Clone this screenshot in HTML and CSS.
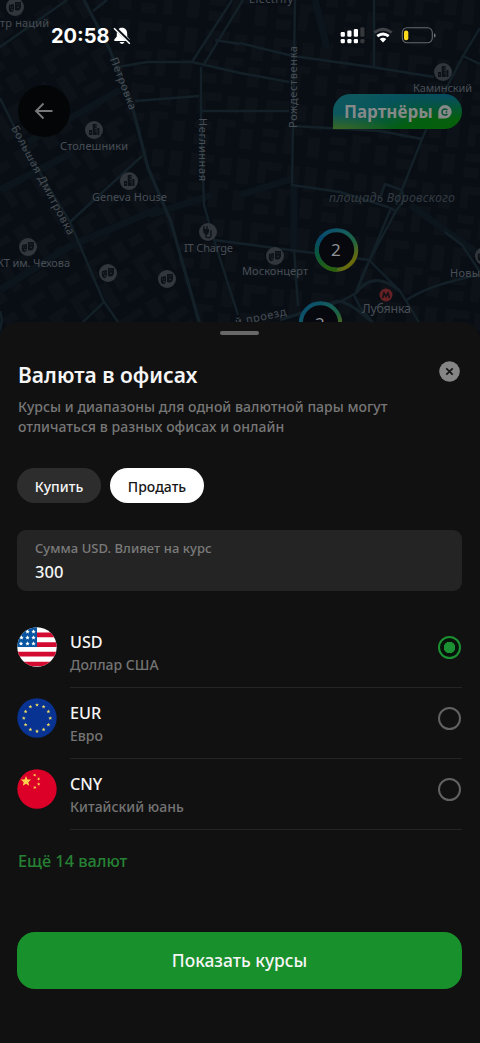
FILE: index.html
```html
<!DOCTYPE html>
<html lang="ru">
<head>
<meta charset="utf-8">
<meta name="viewport" content="width=device-width">
<title>Валюта в офисах</title>
<link rel="stylesheet" href="styles.css">
</head>
<body>
<div class="screen">
  <svg class="map" viewBox="0 0 480 345" width="480" height="345" aria-hidden="true">
    <defs>
      <pattern id="blocks" width="74" height="66" patternUnits="userSpaceOnUse" patternTransform="rotate(-32)">
        <path class="building" d="M4 5h26v7H12v12H4zM36 4h13v18H36zM55 7h14v9H55zM5 31h10v27H5zM21 30h20v7h-9v10H21zM48 27h21v8H56v16h-8zM23 53h20v8H23zM61 42h9v19h-9z"/>
      </pattern>
      <pattern id="blocks-east" width="68" height="62" patternUnits="userSpaceOnUse" patternTransform="rotate(7)">
        <path class="building" d="M5 4h23v8H13v14H5zM34 5h12v17H34zM52 4h12v25H52zM5 33h16v8H5zM27 29h18v7h-9v20h-9zM5 47h15v10H5zM51 36h12v20h-12z"/>
      </pattern>
      <linearGradient id="ring" x1="0" y1="0" x2="1" y2="1">
        <stop offset="0" stop-color="#064773"/><stop offset=".38" stop-color="#145d5d"/><stop offset=".62" stop-color="#1f6340"/><stop offset=".85" stop-color="#6c6c0c"/><stop offset="1" stop-color="#596307"/>
      </linearGradient>
      <linearGradient id="ring-left" x1="0" y1="0" x2="0" y2="1">
        <stop offset="0" stop-color="#064773"/><stop offset=".6" stop-color="#0b5836"/><stop offset="1" stop-color="#29600c"/>
      </linearGradient>
      <g id="office"><circle class="poi" r="9"/><path class="glyph" d="M-5 5V0h3v5zM-1.300 5v-11h4v11zM3.400 5v-7h2v7z"/><path class="poi-line" d="M.7-4h2M.7-1.500h2M.7 1h2M-4 2.500h1"/></g>
      <g id="theatre"><circle class="poi" r="9"/><path class="glyph" d="M-6-2l5-1v5q-1 4-3 3-3 0-2-7zM0-5h6v5q-1 5-6 3z"/><path class="poi-line" d="M-5 0h1m1 0h1M1.500-3h1m1 0h1M-4 3q1-1 2 0M2 0q1 1 2 0"/></g>
    </defs>
    <rect width="480" height="345" fill="#090e15"/>
    <path fill="url(#blocks)" d="M0 0h84l26 50 40 120 50 175H0z"/>
    <path fill="url(#blocks-east)" d="M90 0h390v345H204L150 170 110 50z"/>
    <g class="streets broad">
      <path d="M0 190l72-37M0 290l70-44 90-38M120 90l-92 52M240 195l55-17M410 205l70 50M150 215l62-20M315 0l12 48M294 185v68"/>
    </g>
    <g class="streets">
      <path d="M0 47 67 0M93 11 107 0"/>
      <path d="M84 0 110 50 134 113 148 168 171 222 200 325" class="main"/>
      <path d="M0 98 22 143 70 222 103 300 120 325M70 222 142 156M82 323 104 302M0 311 2 320 0 330"/>
      <path d="M118 67 147 62 192 62 240 73 289 82M135 101 199 96M202 111H289"/>
      <path d="M192 62 232 0M203 66 243 0M215 40 240 44M201 67V115L204 205 214 240 238 315"/>
      <path d="M214 240 290 250 370 260M240 43 293 56 372 67 434 77M374 0V66"/>
      <path d="M295 0 292 185 340 192 388 207M293 126 380 131 422 139M294 249 298 306"/>
      <path d="M480 28 463 56 434 112 422 139 396 205M463 56 480 64M380 198 385 184 402 190 404 200 396 211 388 207"/>
      <path d="M391 208 356 293 342 301 282 319M397 209 366 267 356 292M370 261 400 291 420 324M354 295 360 307 374 324M405 301Q430 284 480 275M445 232 462 245 480 272"/>
      <path d="M356 293Q374 269 400 291M280 320 338 301Q352 303 374 324" class="main"/>
    </g>
    <g class="labels">
      <text x="0" y="27" textLength="49">тр наций</text>
      <text x="249" y="3" textLength="44">Electrify</text>
      <text x="60" y="150" textLength="68">Столешники</text>
      <text x="92" y="201" textLength="75">Geneva House</text>
      <text x="-3" y="267" textLength="73">КТ им. Чехова</text>
      <text x="184" y="252" textLength="49">IT Charge</text>
      <text x="242" y="275" textLength="66">Москонцерт</text>
      <text x="413" y="92" textLength="59">Каминский</text>
      <text x="450" y="277" textLength="30">Новы</text>
      <text x="362" y="313" textLength="49" class="station">Лубянка</text>
      <text x="329" y="202" textLength="126" class="square">площадь Воровского</text>
      <text transform="translate(110 59) rotate(69)" textLength="55">Петровка</text>
      <text transform="translate(11 128) rotate(62)" textLength="122">Большая Дмитровка</text>
      <text transform="translate(199 118) rotate(90)" textLength="63">Неглинная</text>
      <text transform="translate(297 128) rotate(-90)" textLength="82">Рождественка</text>
      <text transform="translate(236 326) rotate(-12)" textLength="52">й проезд</text>
    </g>
    <use href="#theatre" x="15" y="7"/><use href="#office" x="94" y="130"/><use href="#office" x="129" y="181"/>
    <use href="#theatre" x="28" y="247"/><use href="#theatre" x="108" y="273"/><use href="#theatre" x="167" y="279"/><use href="#theatre" x="275" y="256"/>
    <use href="#office" x="443" y="72"/><use href="#theatre" x="484" y="256"/>
    <g transform="translate(208 232)"><circle class="poi" r="9"/><path class="glyph" d="M-5-3h6v3Q0 3-2 3-5 2-5-3z"/><path class="plug" d="M-4-6v3M-1-6v3M-2 2v3q5 2 5-2v-5"/></g>
    <circle cx="386" cy="295" r="6.500" fill="#652124"/><path d="M382.500 298l1.500-5 2 3.500 2-3.500 1.500 5" fill="none" stroke="#131117" stroke-width="1.600"/>
    <circle cx="336.500" cy="250" r="19.700" fill="#07080d" stroke="url(#ring)" stroke-width="4"/>
    <path d="M322.600 236A19.700 19.700 0 0 0 337 269.700" fill="none" stroke="url(#ring-left)" stroke-width="4"/>
    <text x="331" y="256" class="count">2</text>
    <circle cx="320.500" cy="323" r="19.700" fill="#07080d" stroke="url(#ring)" stroke-width="4"/>
    <text x="315" y="330" class="count">2</text>
  </svg>

  <header class="status">
    <div class="clock"><span>20:58</span>
      <svg width="18" height="18" viewBox="0 0 18 18"><path fill="#fff" d="M9 .8C5.700.800 3.800 3.300 3.800 7v2.500L1.300 12.500v1.400h15.400v-1.400l-2.500-3V7c0-3.700-1.900-6.200-5.200-6.200zM6.500 15h5Q9 19 6.500 15z"/><path d="M2.200 1 17.500 15.800" stroke="#090e15" stroke-width="3.200"/><path d="M1 1.300 16.800 16.700" stroke="#fff" stroke-width="1.500"/></svg>
    </div>
    <svg class="signals" width="97" height="18" viewBox="0 0 97 18">
      <g fill="#fff"><rect x=".7" y="5" width="4.200" height="4.700" rx="1.200"/><rect x="7.300" y="3.600" width="4.200" height="6.100" rx="1.200"/><rect x="13.800" y="1.900" width="4.200" height="7.800" rx="1.200"/><rect x=".7" y="12" width="4.200" height="4.200" rx="1.200"/><rect x="7.300" y="12" width="4.200" height="4.200" rx="1.200"/><rect x="13.800" y="12" width="4.200" height="4.200" rx="1.200"/></g>
      <g fill="#35373b"><rect x="20.300" y=".3" width="4.200" height="9.400" rx="1.200"/><rect x="20.300" y="12" width="4.200" height="4.200" rx="1.200"/></g>
      <g fill="none" stroke-width="2.800"><path d="M34.300 5.700Q43-1.300 51.700 5.700" stroke="#404247"/><path d="M37.300 9.200Q43 4.700 48.700 9.200" stroke="#fff"/></g><path fill="#fff" d="M39.700 12q3.300-2.400 6.600 0L43 15.500z"/>
      <rect x="62.300" y=".8" width="30" height="15" rx="4.700" fill="none" stroke="#65686c" stroke-width="1.100"/><rect x="64" y="3.600" width="4.300" height="9.600" rx="1.900" fill="#fbd91b"/><path d="M94 6.200q1.600.4 1.600 2.200T94 10.600z" fill="#73767a"/>
    </svg>
  </header>
  <nav class="topbar">
    <button class="back" aria-label="Назад"><svg width="20" height="20" viewBox="0 0 20 20"><path d="M18.500 10H2M9.500 2.500 2 10l7.500 7.500" fill="none" stroke="#77787a" stroke-width="1.900"/></svg></button>
    <div class="partners"><span>Партнёры</span><svg width="14" height="14" viewBox="0 0 14 14"><path fill="#858987" d="M.3 13.500V7A6.700 6.700 0 1 1 7 13.500z"/><path d="M9.400 5A3.100 3.100 0 1 0 9.400 9M7.700 7h1.500" fill="none" stroke="#064d36" stroke-width="1.500"/></svg></div>
  </nav>

  <main class="sheet">
    <div class="grabber"></div>
    <div class="heading"><h1><span>Валюта в офисах</span></h1><button class="close" aria-label="Закрыть"><svg width="21" height="21" viewBox="0 0 21 21"><circle cx="10.500" cy="10.500" r="10.300" fill="#858585"/><path d="m7.300 7.300 6.400 6.400m0-6.400-6.400 6.400" stroke="#151515" stroke-width="1.700"/></svg></button></div>
    <p class="description">Курсы и диапазоны для одной валютной пары могут<br><span>отличаться в разных офисах и онлайн</span></p>
    <div class="tabs"><button>Купить</button><button class="selected">Продать</button></div>
    <label class="amount"><span>Сумма USD. Влияет на курс</span><strong>300</strong></label>
    <div class="currencies">
      <div class="currency">
        <svg class="flag" viewBox="0 0 40 40"><defs><clipPath id="disc"><circle cx="20" cy="20" r="19.700"/></clipPath><path id="star" d="m0-2.200.6 1.500 1.600.1L1 .5l.4 1.600L0 1.200l-1.400.9L-1 .5l-1.200-1.100 1.600-.1z"/></defs><g clip-path="url(#disc)"><path fill="#fff" d="M0 0h40v40H0z"/><path d="M20 7.800h20M20 17.600h20M0 27.200h40M0 37h40" stroke="#d30b31" stroke-width="4.700"/><path fill="#0754a0" d="M0 0h20v20H0z"/><g fill="#fff"><use href="#star" x="10.500" y="4.500"/><use href="#star" x="16.500" y="4.500"/><use href="#star" x="4.500" y="10.500"/><use href="#star" x="10.500" y="10.500"/><use href="#star" x="16.500" y="10.500"/><use href="#star" x="4" y="16.500"/><use href="#star" x="10.500" y="16.500"/><use href="#star" x="16.500" y="16.500"/></g></g></svg>
        <div class="details"><div><b>USD</b><small>Доллар США</small></div><i class="radio checked"></i></div>
      </div>
      <div class="currency">
        <svg class="flag" viewBox="0 0 40 40"><circle cx="20" cy="20" r="19.700" fill="#083393"/><g fill="#eadb65"><use href="#star" transform="translate(20 6.800) scale(.85)"/><use href="#star" transform="translate(26.600 8.600) scale(.85)"/><use href="#star" transform="translate(31.400 13.400) scale(.85)"/><use href="#star" transform="translate(33.200 20) scale(.85)"/><use href="#star" transform="translate(31.400 26.600) scale(.85)"/><use href="#star" transform="translate(26.600 31.400) scale(.85)"/><use href="#star" transform="translate(20 33.200) scale(.85)"/><use href="#star" transform="translate(13.400 31.400) scale(.85)"/><use href="#star" transform="translate(8.600 26.600) scale(.85)"/><use href="#star" transform="translate(6.800 20) scale(.85)"/><use href="#star" transform="translate(8.600 13.400) scale(.85)"/><use href="#star" transform="translate(13.400 8.600) scale(.85)"/></g></svg>
        <div class="details"><div><b>EUR</b><small>Евро</small></div><i class="radio"></i></div>
      </div>
      <div class="currency">
        <svg class="flag" viewBox="0 0 40 40"><circle cx="20" cy="20" r="19.700" fill="#dc0028"/><g fill="#ffd34d"><use href="#star" transform="translate(9 12) scale(2.300)"/><use href="#star" transform="translate(17.800 6) rotate(20) scale(.75)"/><use href="#star" transform="translate(21.700 9.800) rotate(35) scale(.75)"/><use href="#star" transform="translate(21.700 15) scale(.75)"/><use href="#star" transform="translate(17.800 18.300) rotate(20) scale(.75)"/></g></svg>
        <div class="details"><div><b>CNY</b><small>Китайский юань</small></div><i class="radio"></i></div>
      </div>
    </div>
    <a class="more">Ещё 14 валют</a>
    <button class="submit">Показать курсы</button>
  </main>
</div>
</body>
</html>
```
FILE: styles.css
```css
* { box-sizing: border-box; }
body { margin: 0; background: #111; font-family: "Noto Sans", sans-serif; font-weight: 500; color: #f5f5f5; }
button { border: 0; padding: 0; background: none; color: inherit; font: inherit; }
svg { display: block; flex: none; }
.screen { position: relative; width: 480px; height: 1043px; overflow: hidden; display: flex; flex-direction: column; }
.map { position: absolute; inset: 0 auto auto 0; }
.building { fill: #0c1218; }
.streets { fill: none; stroke: #132027; stroke-width: 2.4; stroke-linejoin: round; }
.streets .main { stroke-width: 3.2; }
.streets.broad { stroke: #0d151c; stroke-width: 7; }
.labels { font-size: 11px; font-weight: 400; fill: #484e55; }
.labels .square { font-size: 12.5px; font-style: italic; fill: #333b41; }
.labels .station { font-size: 12.5px; }
.poi { fill: #30363c; }
.glyph { fill: #0c1218; }
.poi-line { stroke: #30363c; stroke-width: .8; fill: none; }
.plug { stroke: #0c1218; stroke-width: 1.3; fill: none; }
.count { font-size: 17px; font-weight: 400; fill: #909196; }
.status { position: relative; height: 72px; padding: 0 44px 0 51px; display: flex; align-items: center; justify-content: space-between; }
.clock { display: flex; align-items: center; gap: 3px; font: 700 20px/24px Inter, sans-serif; color: #fff; }
.clock span { width: 59px; letter-spacing: 0; }
.signals { margin-right: -1px; }
.topbar { position: relative; height: 250px; padding: 13px 18px 0; display: flex; justify-content: space-between; align-items: flex-start; }
.back { width: 52px; height: 52px; border-radius: 50%; background: #040506; display: grid; place-items: center; }
.partners { width: 129px; height: 35px; margin-top: 9px; border-radius: 18px 18px 18px 0; padding: 0 10px 0 11px; display: flex; justify-content: space-between; align-items: center; color: #858987; font-size: 17px; font-weight: 700; background: radial-gradient(ellipse at 0 110%, #456b16 0, transparent 35%), radial-gradient(ellipse at 90% 0, #064c63 0, transparent 52%), linear-gradient(155deg, #125861 0%, #07565a 36%, #045f12 68%, #076008 100%); }
.sheet { position: relative; height: 721px; padding: 0 18px 0 17px; background: #111; border-radius: 18px 18px 0 0; display: flex; flex-direction: column; }
.grabber { width: 39px; height: 4px; margin: 9px auto 0; border-radius: 2px; background: #686868; flex: none; }
.heading { display: flex; justify-content: space-between; align-items: flex-start; margin-top: 26px; height: 34px; padding: 0 2px 0 1px; }
.close { margin-top: 0; }
h1 { margin: 0; font-size: 21px; line-height: 28px; font-weight: 600; letter-spacing: .03px; }
.description { margin: 2px 0 0 1px; height: 42px; font-size: 14px; line-height: 19.5px; letter-spacing: .04px; color: #777; white-space: nowrap; }
.tabs { display: flex; gap: 9px; margin-top: 29px; height: 35px; }
.tabs button { width: 84px; border-radius: 18px; background: #2d2d2d; font-size: 14px; letter-spacing: .03px; padding-top: 2px; }
.tabs .selected { width: 94px; background: #fff; color: #161616; }
.amount { height: 61px; margin-top: 27px; padding: 8px 18px; border-radius: 9px; background: #242424; display: flex; flex-direction: column; }
.amount span { font-size: 13px; line-height: 20px; letter-spacing: .04px; color: #7b7b7b; }
.amount strong { font-size: 16.5px; line-height: 28px; font-weight: 500; }
.currencies { margin-top: 26px; }
.currency { height: 71px; display: flex; gap: 13px; }
.flag { width: 40px; height: 40px; margin-top: 10px; }
.details { flex: 1; border-bottom: 1px solid #252525; display: flex; justify-content: space-between; padding: 13px 1px 0 0; }
.details b { display: block; font-size: 16.2px; line-height: 24px; font-weight: 500; }
.details small { display: block; font-size: 14px; line-height: 21px; color: #747474; }
.radio { width: 23px; height: 23px; margin-top: 6px; border: 2px solid #626262; border-radius: 50%; }
.checked { border-color: #1b9032; background: radial-gradient(circle, #1b9032 0 5.5px, #07130a 6px); }
.more { margin: 18px 0 0 1px; font-size: 16.3px; line-height: 26px; color: #268135; }
.submit { height: 57px; flex: none; margin-top: 58px; padding-bottom: 1px; border-radius: 18px; background: #18902c; font-size: 17.4px; }
```
